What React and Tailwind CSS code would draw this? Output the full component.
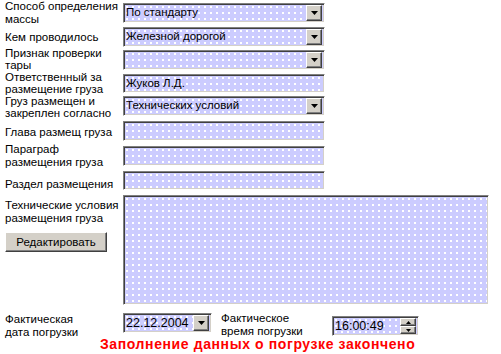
import React from 'react';

const font = { fontFamily: '"Liberation Sans", Arial, sans-serif' };

const dots =
  'bg-[#ccccff] bg-[radial-gradient(#ffffff_0.8px,transparent_1px)] bg-[length:6px_6px]';
const sunken =
  'border border-t-[#808080] border-l-[#808080] border-b-white border-r-white shadow-[inset_1px_1px_0_#404040,inset_-1px_-1px_0_#d4d0c8]';
const raised =
  'bg-[#d4d0c8] border border-t-white border-l-white border-b-[#404040] border-r-[#404040] shadow-[inset_-1px_-1px_0_#808080]';

function DropButton() {
  return (
    <div className={`w-[16px] h-[16px] shrink-0 flex items-center justify-center ${raised}`}>
      <svg width="7" height="4" viewBox="0 0 7 4">
        <path d="M0 0h7L3.5 4z" fill="#000" />
      </svg>
    </div>
  );
}

function Select({ value, w = 'w-[202px]', h = 'h-[20px]' }) {
  return (
    <div className={`${w} ${h} ${dots} ${sunken} flex items-center pl-[2px] pr-[2px]`}>
      <span className="flex-1 text-[11.5px] text-black leading-none truncate">{value}</span>
      <DropButton />
    </div>
  );
}

function Input({ value, h = 'h-[20px]' }) {
  return (
    <div className={`w-[202px] ${h} ${dots} ${sunken} flex items-center pl-[2px]`}>
      <span className="text-[11.5px] text-black leading-none">{value}</span>
    </div>
  );
}

function Row({ label, children, className = '' }) {
  return (
    <div className={`flex items-center ${className}`}>
      <div className="w-[123px] shrink-0 pl-[5px] text-[11.5px] leading-[13px] text-black">
        {label}
      </div>
      {children}
    </div>
  );
}

export default function App() {
  return (
    <div className="w-[501px] h-[354px] bg-white overflow-hidden" style={font}>
      <Row className="h-[20px] mt-[3px]" label={<>Способ определения<br />массы</>}>
        <Select value="По стандарту" />
      </Row>
      <Row className="h-[20px] mt-[4px]" label="Кем проводилось">
        <Select value="Железной дорогой" />
      </Row>
      <Row className="h-[20px] mt-[3px]" label={<span className="relative -top-[1px] block leading-[12px]">Признак проверки<br />тары</span>}>
        <Select value="" />
      </Row>
      <Row className="h-[19px] mt-[4px]" label={<span className="relative -top-[1px] block leading-[12px]">Ответственный за<br />размещение груза</span>}>
        <Input value="Жуков Л.Д." h="h-[19px]" />
      </Row>
      <Row className="h-[20px] mt-[3px]" label={<span className="relative top-[1px] block leading-[12px]">Груз размещен и<br />закреплен согласно</span>}>
        <Select value="Технических условий" />
      </Row>
      <Row className="h-[20px] mt-[5px]" label={<span className="relative top-[1px]">Глава размещ груза</span>}>
        <Input value="" />
      </Row>
      <Row className="h-[20px] mt-[5px]" label={<>Параграф<br />размещения груза</>}>
        <Input value="" />
      </Row>
      <Row className="h-[19px] mt-[5px]" label={<span className="relative top-[4px]">Раздел размещения</span>}>
        <Input value="" h="h-[19px]" />
      </Row>

      {/* textarea row */}
      <div className="flex mt-[5px]">
        <div className="w-[123px] shrink-0 pl-[5px] pt-[4px] text-[11.5px] leading-[13px] text-black">
          <div>
            Технические условия
            <br />
            размещения груза
          </div>
          <button
            className={`mt-[7px] w-[102px] h-[20px] text-[11.5px] text-black flex items-center justify-center ${raised}`}
          >
            Редактировать
          </button>
        </div>
        <div className={`w-[366px] h-[110px] ${dots} ${sunken}`} />
      </div>

      {/* bottom row */}
      <div className="flex items-start mt-[8px]">
        <div className="w-[123px] shrink-0 pl-[5px] text-[11.5px] leading-[13px] text-black">
          Фактическая
          <br />
          дата погрузки
        </div>
        <Select value={<span className="text-[12.5px]">22.12.2004</span>} w="w-[89px]" />
        <div className="ml-[9px] w-[111px] text-[11.5px] leading-[13px] text-black -mt-[1px]">
          Фактическое
          <br />
          время погрузки
        </div>
        <div className={`mt-[3px] w-[87px] h-[20px] ${dots} ${sunken} flex items-center pl-[2px] pr-[2px]`}>
          <span className="flex-1 text-[12.5px] text-black leading-none">16:00:49</span>
          <div className="flex flex-col w-[16px] h-[16px]">
            <div className={`flex-1 flex items-center justify-center ${raised}`}>
              <svg width="5" height="3" viewBox="0 0 5 3">
                <path d="M2.5 0L5 3H0z" fill="#000" />
              </svg>
            </div>
            <div className={`flex-1 flex items-center justify-center ${raised}`}>
              <svg width="5" height="3" viewBox="0 0 5 3">
                <path d="M0 0h5L2.5 3z" fill="#000" />
              </svg>
            </div>
          </div>
        </div>
      </div>

      <div className="pl-[100px] -mt-[2px] text-[14px] font-bold text-[#ff0000] tracking-[0.6px] leading-[15px] whitespace-nowrap">
        Заполнение данных о погрузке закончено
      </div>
    </div>
  );
}
